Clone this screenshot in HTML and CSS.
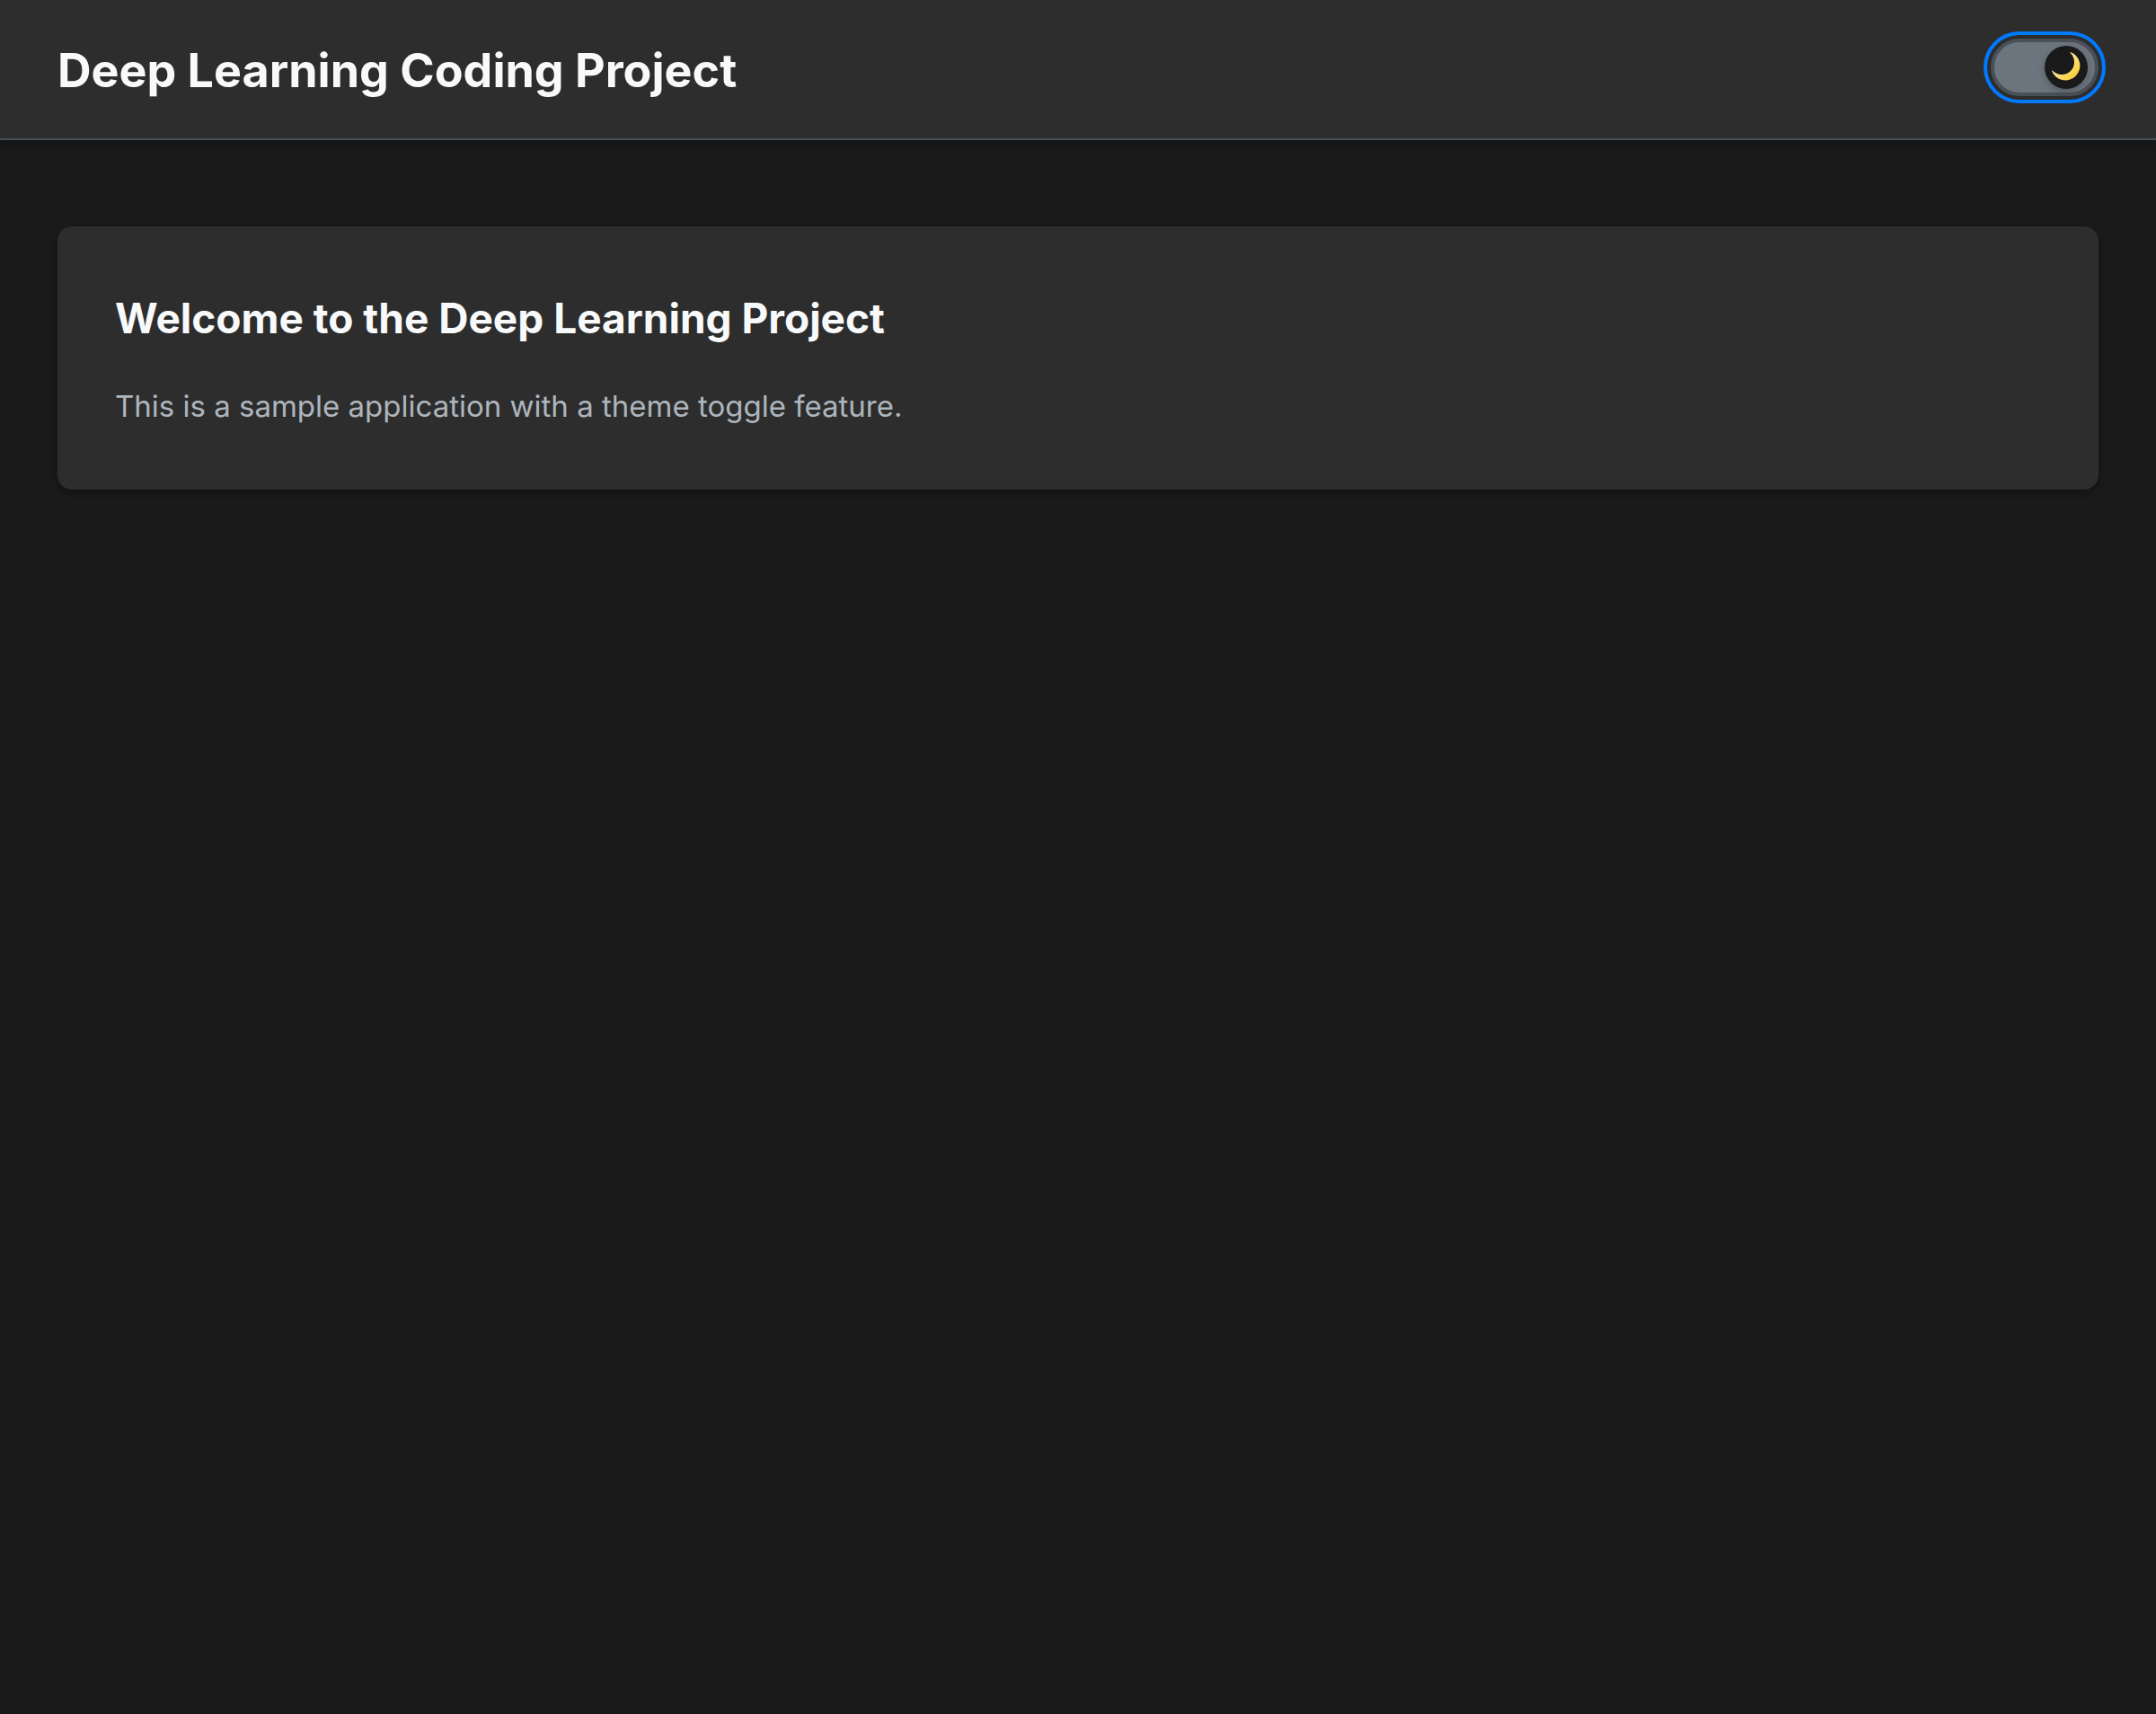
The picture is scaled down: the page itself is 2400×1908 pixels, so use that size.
FILE: index.html
```html
<!DOCTYPE html>
<html lang="en">
<head>
  <meta charset="utf-8">
  <meta name="viewport" content="width=device-width, initial-scale=1">
  <title>Deep Learning Coding Project</title>
  <link rel="stylesheet" href="styles.css">
</head>
<body>
  <header class="header">
    <h1 class="header-title">Deep Learning Coding Project</h1>
    <div class="header-actions">
      <button class="theme-toggle" type="button" role="switch" aria-checked="true" aria-label="Switch to light theme">
        <span class="theme-toggle-thumb">
          <svg class="theme-toggle-icon" viewBox="0 0 48 48" aria-hidden="true">
            <defs>
              <linearGradient id="moon" x1="0" y1="0" x2="1" y2="1">
                <stop offset="0.45" stop-color="#fbe48a"/>
                <stop offset="0.75" stop-color="#fbd54a"/>
                <stop offset="1" stop-color="#e9ae2c"/>
              </linearGradient>
            </defs>
            <path fill="url(#moon)" d="M28.800 7A16.200 16.200 0 1 1 8 27.800L8.800 27.400A13.880 13.880 0 1 0 28.400 7.800Z"/>
          </svg>
        </span>
      </button>
    </div>
  </header>
  <main class="main">
    <section class="card">
      <h2 class="card-title">Welcome to the Deep Learning Project</h2>
      <p class="card-text">This is a sample application with a theme toggle feature.</p>
    </section>
  </main>
</body>
</html>
```
FILE: styles.css
```css
:root {
  --bg: #1a1a1a;
  --surface: #2d2d2d;
  --border: #495057;
  --text: #f8f9fa;
  --text-muted: #adb5bd;
  --track: #6c757d;
  --focus: #007bff;
  --shadow: 0 4px 8px rgba(0, 0, 0, 0.3);
}

* {
  box-sizing: border-box;
  margin: 0;
  padding: 0;
}

body {
  min-height: 100vh;
  background: var(--bg);
  color: var(--text);
  font-family: Inter, "Liberation Sans", sans-serif;
}

.header {
  display: flex;
  align-items: center;
  justify-content: space-between;
  padding: 34px 64px 30px;
  background: var(--surface);
  border-bottom: 2px solid var(--border);
  box-shadow: var(--shadow);
}

.header-title {
  font-size: 52px;
  font-weight: 650;
  line-height: 90px;
}

.header-actions {
  display: flex;
  padding-bottom: 8px;
}

.theme-toggle {
  display: flex;
  align-items: center;
  justify-content: flex-end;
  width: 120px;
  height: 64px;
  padding: 0 8px;
  background: var(--track);
  border: 4px solid var(--border);
  border-radius: 32px;
  outline: 4px solid var(--focus);
  outline-offset: 4px;
  cursor: pointer;
}

.theme-toggle-thumb {
  display: block;
  width: 48px;
  height: 48px;
  background: var(--bg);
  border-radius: 50%;
  box-shadow: 0 4px 8px rgba(0, 0, 0, 0.2);
}

.theme-toggle-icon {
  display: block;
  width: 100%;
  height: 100%;
}

.main {
  padding: 96px 64px;
}

.card {
  padding: 64px;
  background: var(--surface);
  border-radius: 16px;
  box-shadow: var(--shadow);
}

.card-title {
  margin-bottom: 30px;
  font-size: 46px;
  font-weight: 700;
  line-height: 77px;
}

.card-text {
  color: var(--text-muted);
  font-size: 33px;
  line-height: 58px;
}
```
